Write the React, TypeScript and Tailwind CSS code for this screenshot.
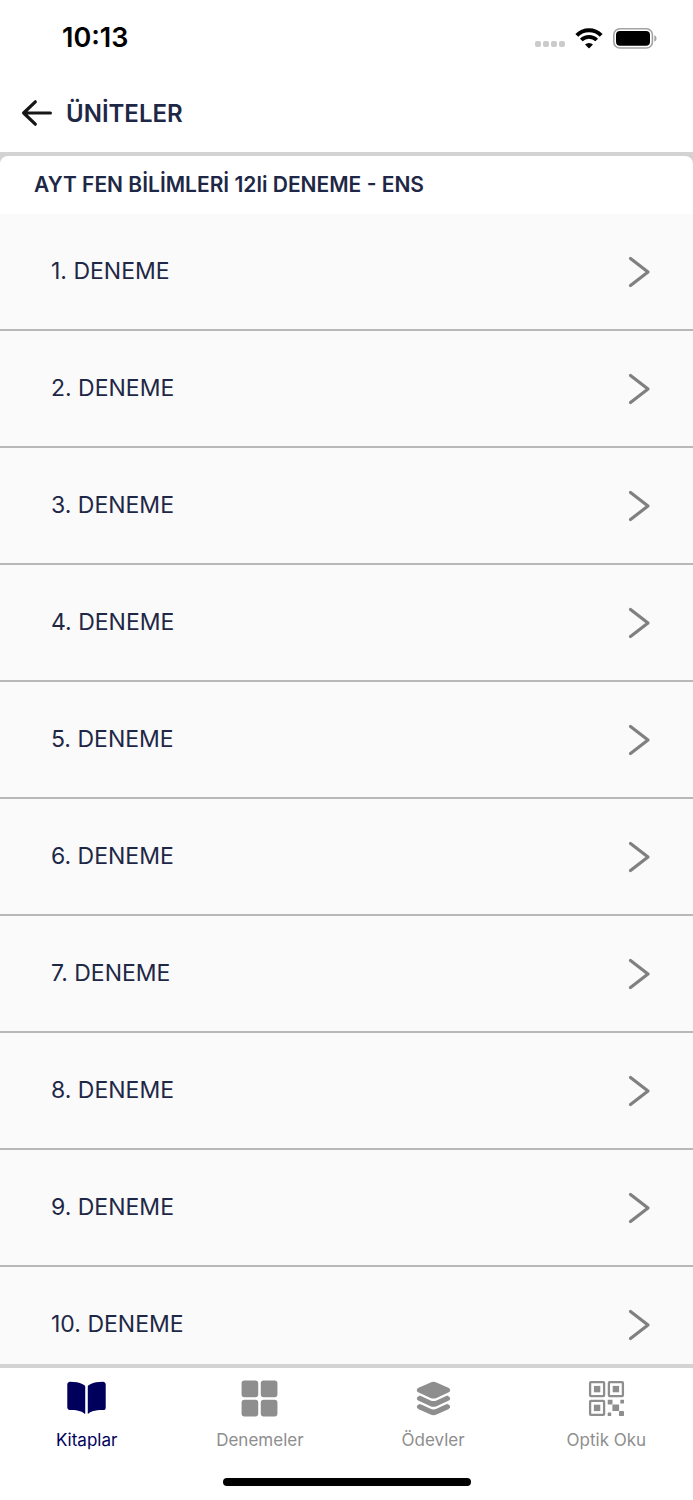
import type { ReactNode } from 'react';
import { IoBook, IoGrid, IoLayers } from 'react-icons/io5';

const units = Array.from({ length: 10 }, (_, i) => `${i + 1}. DENEME`);

function QrIcon() {
  return (
    <svg width="41" height="41" viewBox="-3 -3 41 41" fill="currentColor" aria-hidden="true">
      <g fill="none" stroke="currentColor" strokeWidth="2.3">
        <rect x="1.1" y="1.1" width="14" height="14" rx="0.8" />
        <rect x="19.9" y="1.1" width="14" height="14" rx="0.8" />
        <rect x="1.1" y="19.9" width="14" height="14" rx="0.8" />
      </g>
      <rect x="4.9" y="4.9" width="6.4" height="6.4" />
      <rect x="23.7" y="4.9" width="6.4" height="6.4" />
      <rect x="4.9" y="23.7" width="6.4" height="6.4" />
      <rect x="18.7" y="18.7" width="4.8" height="4.8" rx="0.4" />
      <rect x="31.3" y="18.7" width="3.7" height="3.7" rx="0.4" />
      <rect x="23.4" y="23.4" width="6.7" height="6.7" rx="0.4" />
      <rect x="18.7" y="31.5" width="3.5" height="3.5" rx="0.4" />
      <rect x="30" y="30" width="5" height="5" rx="0.4" />
    </svg>
  );
}

const tabs: { label: string; icon: ReactNode; active?: boolean }[] = [
  { label: 'Kitaplar', icon: <IoBook size={41} />, active: true },
  { label: 'Denemeler', icon: <IoGrid size={41} /> },
  { label: 'Ödevler', icon: <IoLayers size={41} /> },
  { label: 'Optik Oku', icon: <QrIcon /> },
];

function WifiIcon() {
  return (
    <svg width="28" height="21" viewBox="0 0 28 21" fill="none" aria-hidden="true">
      <path d="M1.8 7.4a17.3 17.3 0 0 1 24.4 0" stroke="#000" strokeWidth="4" />
      <path d="M6.3 12a10.9 10.9 0 0 1 15.4 0" stroke="#000" strokeWidth="3.8" />
      <path d="M14 20.6l-4-4.1a5.8 5.8 0 0 1 8 0z" fill="#000" />
    </svg>
  );
}

function BatteryIcon() {
  return (
    <svg width="44" height="21" viewBox="0 0 44 21" fill="none" aria-hidden="true">
      <rect x="0.8" y="0.8" width="38.6" height="19.2" rx="6" stroke="#a3a3a3" strokeWidth="1.6" />
      <rect x="3" y="3" width="34" height="14.8" rx="4" fill="#000" />
      <path d="M41.3 7.2c1.4.6 2.2 1.8 2.2 3.2s-.8 2.6-2.2 3.2z" fill="#a3a3a3" />
    </svg>
  );
}

function StatusBar() {
  return (
    <div className="flex h-19 items-center justify-between pr-9 pl-[62px]">
      <span className="text-[27px] font-semibold text-black">10:13</span>
      <div className="flex items-center gap-2.5">
        <div className="flex gap-0.5 pt-3">
          {[0, 1, 2, 3].map((dot) => (
            <span key={dot} className="size-1.5 rounded-xs bg-[#cbcbcb]" />
          ))}
        </div>
        <WifiIcon />
        <BatteryIcon />
      </div>
    </div>
  );
}

function Header() {
  return (
    <header className="flex h-19 items-center gap-3 pl-5">
      <button type="button" aria-label="Geri" className="cursor-pointer">
        <svg width="34" height="30" viewBox="0 0 34 30" fill="none" stroke="#161616" strokeWidth="3.2" strokeLinecap="round" strokeLinejoin="round">
          <path d="M15.3 2.8L3.6 14l11.7 11.2M3.6 14h26.8" />
        </svg>
      </button>
      <h1 className="text-2xl font-semibold">ÜNİTELER</h1>
    </header>
  );
}

function UnitRow({ title }: { title: string }) {
  return (
    <li className="border-b-2 border-[#b8b8b8]">
      <button
        type="button"
        className="flex h-[115px] w-full cursor-pointer items-center justify-between pr-10 pl-[51px] text-left text-[23px]"
      >
        {title}
        <svg width="26" height="36" viewBox="0 0 26 36" fill="none" stroke="#808080" strokeWidth="3.2" strokeLinecap="round" strokeLinejoin="round" aria-hidden="true">
          <path d="M3.5 4.5L21 18 3.5 31.5" />
        </svg>
      </button>
    </li>
  );
}

function TabBar() {
  return (
    <nav className="border-t-4 border-[#d3d3d3] bg-white">
      <div className="grid h-[110px] grid-cols-4">
        {tabs.map(({ label, icon, active }) => (
          <a
            key={label}
            href="#"
            className={`flex flex-col items-center gap-[9px] pt-2.5 text-[17px] ${active ? 'text-[#00005c]' : 'text-[#8e8e8e]'}`}
          >
            {icon}
            <span>{label}</span>
          </a>
        ))}
      </div>
      <div className="mx-auto mb-3.5 h-2 w-62 rounded-full bg-black" />
    </nav>
  );
}

export default function App() {
  return (
    <div className="flex h-screen flex-col bg-white font-['Inter',sans-serif] text-[#1e2846]">
      <StatusBar />
      <Header />
      <main className="flex min-h-0 flex-1 flex-col bg-[#d3d3d3] pt-1">
        <h2 className="rounded-t-lg bg-white py-[15px] pl-[34px] text-[21px] leading-7 font-semibold">
          AYT FEN BİLİMLERİ 12li DENEME - ENS
        </h2>
        <ul className="min-h-0 flex-1 overflow-y-auto bg-[#fafafa] [scrollbar-width:none]">
          {units.map((title) => (
            <UnitRow key={title} title={title} />
          ))}
        </ul>
      </main>
      <TabBar />
    </div>
  );
}
